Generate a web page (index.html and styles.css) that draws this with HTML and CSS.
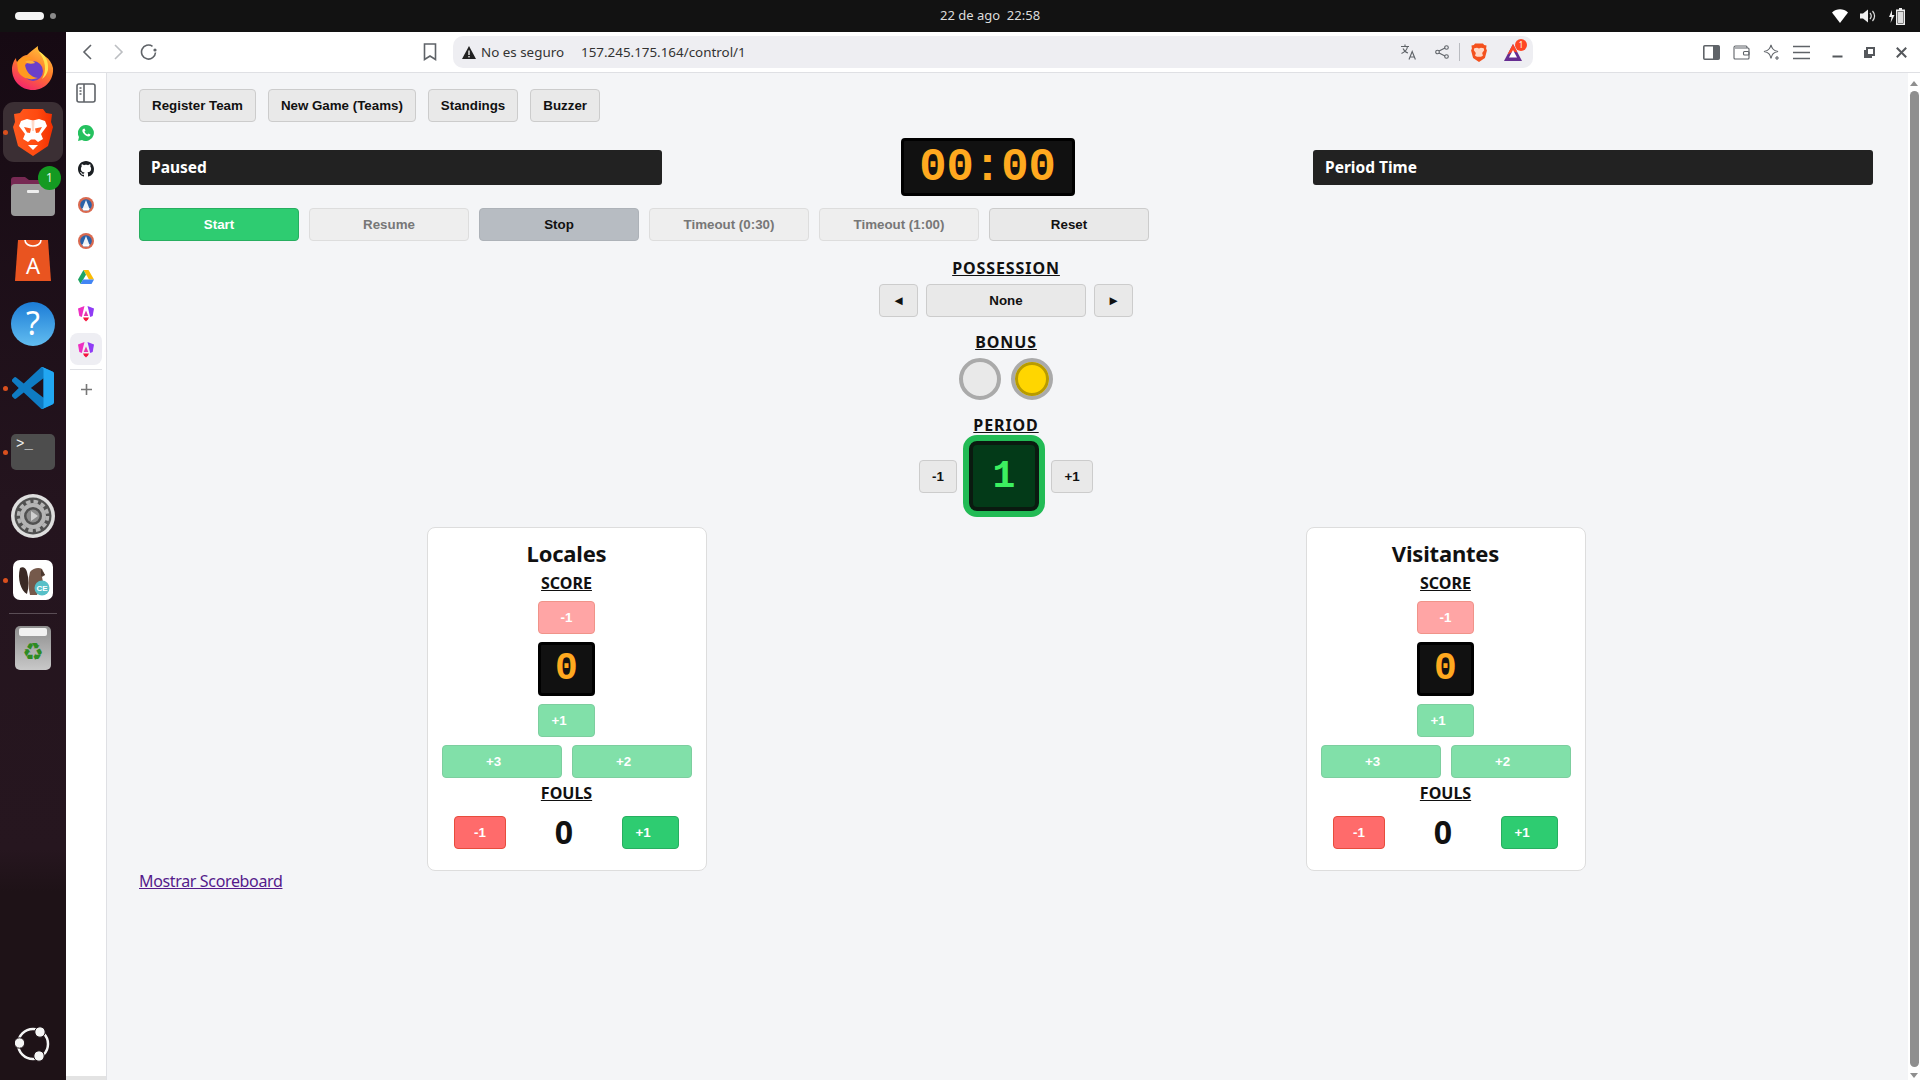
FILE: index.html
```html
<!DOCTYPE html>
<html lang="es">
<head>
    <meta charset="UTF-8" />
    <title>Control</title>
    <link rel="stylesheet" href="styles.css">
</head>
<body>
    <div class="topbar">
        <div class="workspaces"><span class="pill"></span><span class="dot"></span></div>
        <div class="clock">22 de ago&nbsp;&nbsp;22:58</div>
        <div class="tray">
            <svg width="16" height="14" viewBox="0 0 16 14"><path d="M0 3.5C4.5-.8 11.500-.8 16 3.500L8 14z" fill="#fff"/></svg>
            <svg width="16" height="14" viewBox="0 0 16 14"><path d="M0 4.500h3L8 .5v13l-5-4H0z" fill="#eee"/><path d="M10 4c1.500 1.800 1.500 4.200 0 6M12.500 2c2.500 3 2.500 7 0 10" stroke="#ddd" stroke-width="1.200" fill="none"/></svg>
            <svg width="18" height="17" viewBox="0 0 18 17"><path d="M4 2 1 9h2.500L2.500 15 6.500 7H4z" fill="#eee"/><path d="M11 0h3v1.500h3V17H8V1.500h3z" fill="#eee"/><rect x="9.500" y="3" width="6" height="12.500" fill="#121212"/><rect x="10" y="3.500" width="5" height="11.500" fill="#ddd"/></svg>
        </div>
    </div>

    <div class="desktop">
        <div class="dock">
            <div class="dock-item">
                <svg width="44" height="46" viewBox="0 0 44 46">
                    <defs>
                        <linearGradient id="fx" x1="0.8" y1="0" x2="0.3" y2="1"><stop offset="0" stop-color="#ffc93d"/><stop offset=".5" stop-color="#ff7a2a"/><stop offset="1" stop-color="#f3236e"/></linearGradient>
                    </defs>
                    <path d="M27 1c-1 5 3 7 8 11 3 2 6 6 7 11 1 12-8 22-20 22C10 45 1 36 1 24c0-4 2-9 4-11 0 3 1 4 2 5 1-4 5-8 9-8 3-3 7-6 11-9z" fill="url(#fx)"/>
                    <circle cx="22" cy="26" r="10" fill="#6b3fc9"/>
                    <path d="M6 17c4-6 10-6 16-4-3 1-7 3-8 7 1 6 5 12 13 13-8 3-17 0-20-7z" fill="#ff9a1f"/>
                    <path d="M14 17c3-2 8-2 10 1-3 1-7 1-10-1z" fill="#ffb13a"/>
                    <path d="M27 6c7 3 11 10 10 19-1 4-3 7-6 9 5-8 4-19-4-28z" fill="#ffe14d"/>
                </svg>
            </div>
            <div class="dock-item is-active">
                <span class="run-dot"></span>
                <svg width="40" height="48" viewBox="0 0 40 48">
                    <defs>
                        <linearGradient id="bv" x1="0" y1="0" x2="1" y2="0"><stop offset="0" stop-color="#ff5a1f"/><stop offset=".6" stop-color="#ff4a10"/><stop offset="1" stop-color="#f22f00"/></linearGradient>
                    </defs>
                    <path d="M10 1h20l3 4 6 1-1 8 2 5-5 19-15 10L5 38 0 19l2-5-1-8 6-1z" fill="url(#bv)"/>
                    <path d="M8 13l6-2 6 1.500 6-1.500 6 2 2 5-6 8 2 5-5 3-3-2.500h-4L15 34l-5-3 2-5-6-8z" fill="#fff"/>
                    <path d="M15 37h10l-5 5z" fill="#fff"/>
                    <path d="M11 19l7 1.500-1 4.500-3-.5zM29 19l-7 1.500 1 4.500 3-.5z" fill="#ff5a1f"/>
                    <path d="M18.500 13h3l-.5 10h-2z" fill="#ffd9c8"/>
                </svg>
            </div>
            <div class="dock-item">
                <svg width="46" height="42" viewBox="0 0 46 42">
                    <path d="M1 5q0-3 3-3h11l4 3h20q3 0 3 3v8H1z" fill="#772953"/>
                    <rect x="1" y="9" width="44" height="32" rx="4" fill="#9a9a9a"/>
                    <rect x="17" y="15" width="12" height="3" rx="1" fill="#eee"/>
                </svg>
                <span class="dock-badge">1</span>
            </div>
            <div class="dock-item">
                <svg width="36" height="42" viewBox="0 0 36 42">
                    <path d="M3 1h30l3 41H0z" fill="#e95420"/>
                    <path d="M10 1c0 8 16 8 16 0" stroke="#fff" stroke-width="1.600" fill="none"/>
                    <text x="18" y="35" class="store-a">A</text>
                </svg>
            </div>
            <div class="dock-item">
                <svg width="44" height="44" viewBox="0 0 44 44">
                    <defs>
                        <linearGradient id="hp" x1="0" y1="0" x2="0" y2="1"><stop offset="0" stop-color="#1c7cd6"/><stop offset="1" stop-color="#62bdf0"/></linearGradient>
                    </defs>
                    <circle cx="22" cy="22" r="22" fill="url(#hp)"/>
                    <text x="22" y="33" class="help-q">?</text>
                </svg>
            </div>
            <div class="dock-item">
                <span class="run-dot"></span>
                <svg width="42" height="42" viewBox="0 0 100 100">
                    <path d="M96 11 75 1a6 6 0 0 0-7 1L28 39 10 25a4 4 0 0 0-5 0L1 29a4 4 0 0 0 0 6l15 15L1 65a4 4 0 0 0 0 6l4 4a4 4 0 0 0 5 0l18-14 40 37a6 6 0 0 0 7 1l21-10a6 6 0 0 0 4-6V17a6 6 0 0 0-4-6zM75 73 45 50l30-23z" fill="#0f7cc4"/>
                    <path d="M68 2a6 6 0 0 1 7-1l21 10a6 6 0 0 1 4 6v66a6 6 0 0 1-4 6L75 99a6 6 0 0 1-7-1c3 2 7 0 7-3V5c0-3-4-5-7-3z" fill="#22a7f2"/>
                </svg>
            </div>
            <div class="dock-item">
                <span class="run-dot"></span>
                <div class="terminal-tile">&gt;_</div>
            </div>
            <div class="dock-item">
                <svg width="46" height="46" viewBox="0 0 46 46">
                    <circle cx="23" cy="23" r="22" fill="#dedede"/>
                    <circle cx="23" cy="23" r="18.500" fill="#505050"/>
                    <circle cx="23" cy="23" r="14.500" fill="none" stroke="#b4b4b4" stroke-width="3.500" stroke-dasharray="4.500 3.100"/>
                    <circle cx="23" cy="23" r="11" fill="none" stroke="#b4b4b4" stroke-width="4"/>
                    <circle cx="23" cy="23" r="6.500" fill="#8c8c8c"/>
                    <path d="M21 18l7 5-7 5z" fill="#cfcfcf"/>
                </svg>
            </div>
            <div class="dock-item">
                <span class="run-dot"></span>
                <svg width="40" height="40" viewBox="0 0 40 40">
                    <rect width="40" height="40" rx="7" fill="#fff"/>
                    <path d="M7 8c3-2 6 0 7 4 2 7 2 15 0 22-6-3-10-15-7-26z" fill="#3a2a25"/>
                    <path d="M17 12c3-4 9-5 12-3l3 6-3 2 1 5-2 4-4 9h-7c-2-8-2-16 0-23z" fill="#75594b"/>
                    <path d="M28 9l4 6-4 1z" fill="#4a372f"/>
                    <circle cx="29" cy="28" r="7.500" fill="#57c0c8"/>
                    <text x="29" y="31" class="beaver-ce">CE</text>
                </svg>
            </div>
            <div class="dock-sep"></div>
            <div class="dock-item">
                <div class="trash-tile"><span class="trash-lid"></span><span class="trash-mark">♻</span></div>
            </div>
            <div class="dock-item dock-bottom">
                <svg width="36" height="36" viewBox="0 0 36 36">
                    <circle cx="18" cy="18" r="15" fill="none" stroke="#f5f5f5" stroke-width="2.500"/>
                    <circle cx="25" cy="6" r="5.200" fill="#f5f5f5" stroke="#1f1318" stroke-width="1"/>
                    <circle cx="4.500" cy="17" r="5.200" fill="#f5f5f5" stroke="#1f1318" stroke-width="1"/>
                    <circle cx="24" cy="30" r="5.200" fill="#f5f5f5" stroke="#1f1318" stroke-width="1"/>
                </svg>
            </div>
        </div>

        <div class="browser">
            <div class="toolbar">
                <div class="nav-icons">
                    <svg width="16" height="16" viewBox="0 0 16 16"><path d="M11 1 4 8l7 7" class="ln"/></svg>
                    <svg width="16" height="16" viewBox="0 0 16 16"><path d="m5 1 7 7-7 7" class="ln ln-off"/></svg>
                    <svg width="18" height="18" viewBox="0 0 18 18"><path d="M15.500 9.500A7 7 0 1 1 12.500 3.300" class="ln"/><circle cx="15" cy="7" r="1.600" fill="#5f6368"/></svg>
                </div>
                <svg class="bookmark" width="14" height="18" viewBox="0 0 14 18"><path d="M1.500 1h11v15.500L7 13l-5.500 3.500z" class="ln"/></svg>
                <div class="urlbar">
                    <svg width="14" height="13" viewBox="0 0 14 13"><path d="M7 0 14 13H0z" fill="#222"/><rect x="6.300" y="4.500" width="1.400" height="4.500" fill="#eee"/><rect x="6.300" y="10" width="1.400" height="1.400" fill="#eee"/></svg>
                    <span class="not-secure">No es seguro</span>
                    <span class="url">157.245.175.164/control/1</span>
                    <div class="url-icons">
                        <svg class="translate" width="16" height="16" viewBox="0 0 16 16"><path d="M0 2.500h8M4 .5v2M6.500 2.500C6 6 4 8 .5 9.500M2 4.500c1 2 3 4 5 4.500" class="ln ln-thin"/><path d="m8 15.500 3.200-8 3.200 8M9 13h4.500" class="ln ln-thin"/></svg>
                        <svg width="14" height="14" viewBox="0 0 14 14"><circle cx="2.500" cy="7" r="1.800" class="ln ln-thin"/><circle cx="11.500" cy="2.500" r="1.800" class="ln ln-thin"/><circle cx="11.500" cy="11.500" r="1.800" class="ln ln-thin"/><path d="m4 6 6-3M4 8l6 3" class="ln ln-thin"/></svg>
                        <span class="url-sep"></span>
                        <svg width="16" height="19" viewBox="0 0 40 48"><path d="M10 1h20l3 4 6 1-1 8 2 5-5 19-15 10L5 38 0 19l2-5-1-8 6-1z" fill="#f4511e"/><path d="M8 13l7-1 5 2 5-2 7 1 1 5-5 7 2 7-5 3h-10l-5-3 2-7-5-7z" fill="#ffd9c8"/></svg>
                        <span class="rewards">
                            <svg width="18" height="17" viewBox="0 0 18 17"><path d="M9 0 18 17H0z" fill="#662d91"/><path d="M9 0 13.500 8.500 9 7.500 3.500 10.500z" fill="#ff4724"/><path d="M9 6 13 13.500H5z" fill="#fff"/></svg>
                            <span class="rewards-count">1</span>
                        </span>
                    </div>
                </div>
                <div class="browser-icons">
                    <svg width="17" height="15" viewBox="0 0 17 15"><rect x=".8" y=".8" width="15.400" height="13.400" rx="1" class="ln"/><rect x="10" y="1" width="6" height="13" fill="#5f6368"/></svg>
                    <svg width="17" height="15" viewBox="0 0 17 15"><path d="M14 3V2q0-1-1-1H2.500Q1 1 1 2.500v10.500q0 1 1 1h13q1 0 1-1V4q0-1-1-1H2" class="ln ln-thin"/><rect x="10.500" y="6.500" width="5.500" height="3.500" rx="1" class="ln ln-thin"/></svg>
                    <svg width="17" height="17" viewBox="0 0 17 17"><path d="M8 1c1 4 2.500 5.500 7 6.500-4.500 1-6 2.500-7 7-1-4.500-2.500-6-7-7C5.500 6.500 7 5 8 1z" class="ln ln-thin"/><path d="M14 12v4M12 14h4" class="ln ln-thin"/></svg>
                    <svg width="17" height="15" viewBox="0 0 17 15"><path d="M0 1.500h17M0 7.500h17M0 13.500h17" class="ln"/></svg>
                </div>
                <div class="window-icons">
                    <svg width="11" height="11" viewBox="0 0 11 11"><path d="M.5 9.500h10" class="ln ln-bold"/></svg>
                    <svg width="11" height="11" viewBox="0 0 11 11"><path d="M3 1h7v7H3z" class="ln ln-bold"/><path d="M1 3v7h7" class="ln ln-bold"/></svg>
                    <svg width="11" height="11" viewBox="0 0 11 11"><path d="m.8.8 9.400 9.400M10.200.8.800 10.200" class="ln ln-bold"/></svg>
                </div>
            </div>

            <div class="browser-body">
                <div class="sidebar">
                    <div class="side-item side-toggle">
                        <svg width="20" height="20" viewBox="0 0 20 20"><rect x="1" y="1" width="18" height="18" rx="2" class="ln"/><path d="M8 1v18" class="ln"/><path d="M3.500 5h2M3.500 8h2M3.500 11h2" class="ln"/></svg>
                    </div>
                    <div class="side-item">
                        <svg width="16" height="16" viewBox="0 0 16 16"><path d="M8 0a8 8 0 0 0-7 12L0 16l4-1a8 8 0 1 0 4-15z" fill="#25c15f"/><path d="M5 4c-1 1-1 3 1 5s4 3 6 2l.500-1.500-2-1-1 1C8 9 7 8 6.500 6.500l1-1-1-2z" fill="#fff"/></svg>
                    </div>
                    <div class="side-item">
                        <svg width="16" height="16" viewBox="0 0 16 16"><path fill="#1b1f23" d="M8 0C3.580 0 0 3.580 0 8c0 3.540 2.290 6.530 5.470 7.590.4.07.55-.17.55-.38 0-.19-.01-.82-.01-1.490-2.010.37-2.530-.49-2.690-.94-.09-.23-.48-.94-.82-1.130-.28-.15-.68-.52-.01-.53.63-.01 1.080.58 1.230.82.72 1.210 1.870.87 2.330.66.07-.52.28-.87.51-1.070-1.780-.2-3.640-.89-3.640-3.950 0-.87.31-1.590.82-2.150-.08-.2-.36-1.020.08-2.120 0 0 .67-.21 2.200.82.64-.18 1.320-.27 2-.27.68 0 1.360.09 2 .27 1.530-1.040 2.200-.82 2.200-.82.44 1.100.16 1.920.08 2.120.51.56.82 1.270.82 2.150 0 3.070-1.870 3.750-3.650 3.950.29.25.54.73.54 1.480 0 1.070-.01 1.930-.01 2.200 0 .21.15.46.55.38A8.013 8.013 0 0 0 16 8c0-4.420-3.580-8-8-8z"/></svg>
                    </div>
                    <div class="side-item"><svg width="16" height="16"><use href="#seal"/></svg></div>
                    <div class="side-item"><svg width="16" height="16"><use href="#seal"/></svg></div>
                    <div class="side-item">
                        <svg width="16" height="15" viewBox="0 0 16 15"><path d="M5.500 0h5L16 9.500h-5z" fill="#fbbc04"/><path d="M5.500 0 0 9.500 2.500 14 8 4.700z" fill="#1fa463"/><path d="M5 9.500h11L13.500 14h-11z" fill="#4285f4"/></svg>
                    </div>
                    <div class="side-item"><svg width="16" height="17"><use href="#ng"/></svg></div>
                    <div class="side-item is-current"><svg width="16" height="17"><use href="#ng"/></svg></div>
                    <div class="side-sep"></div>
                    <div class="side-add">
                        <svg width="11" height="11" viewBox="0 0 11 11"><path d="M5.500 0v11M0 5.500h11" class="ln ln-add"/></svg>
                    </div>
                    <div class="side-foot"></div>
                    <svg width="0" height="0" class="defs">
                        <symbol id="seal" viewBox="0 0 16 16">
                            <circle cx="8" cy="8" r="8" fill="#d9694f"/>
                            <circle cx="8" cy="8" r="5.800" fill="#2a62a8"/>
                            <path d="M8 3 10 8l1.500 4h-7L6 8z" fill="#eef2f6"/>
                            <path d="M4 11.500h8L10.500 13.500h-5z" fill="#fff"/>
                        </symbol>
                        <symbol id="ng" viewBox="0 0 16 17">
                            <path d="M6.500 1 0 3.500 1.300 11l2.500 1z" fill="#ee2fc2"/>
                            <path d="M9.500 1 16 3.500 14.700 11l-2.500 1z" fill="#8f3cf5"/>
                            <path d="M8 5.500 10.300 11H5.700z" fill="#e535ab"/>
                            <path d="M5 12.500h6l-1 2-2 2-2-2z" fill="#f5133e"/>
                        </symbol>
                    </svg>
                </div>

                <main class="page">
                    <div class="nav-row">
                        <button class="btn">Register Team</button>
                        <button class="btn">New Game (Teams)</button>
                        <button class="btn">Standings</button>
                        <button class="btn">Buzzer</button>
                    </div>

                    <div class="clock-row">
                        <div class="status status-left">Paused</div>
                        <div class="game-clock">00:00</div>
                        <div class="status status-right">Period Time</div>
                    </div>

                    <div class="timer-row">
                        <button class="btn btn-wide btn-start">Start</button>
                        <button class="btn btn-wide btn-off">Resume</button>
                        <button class="btn btn-wide btn-stop">Stop</button>
                        <button class="btn btn-wide btn-off">Timeout (0:30)</button>
                        <button class="btn btn-wide btn-off">Timeout (1:00)</button>
                        <button class="btn btn-wide">Reset</button>
                    </div>

                    <div class="center-col">
                        <div class="label label-spaced">POSSESSION</div>
                        <div class="possession">
                            <button class="btn btn-arrow">◄</button>
                            <button class="btn btn-wide">None</button>
                            <button class="btn btn-arrow">►</button>
                        </div>

                        <div class="label label-spaced">BONUS</div>
                        <div class="bonus">
                            <span class="lamp"></span>
                            <span class="lamp lamp-on"></span>
                        </div>

                        <div class="label label-spaced">PERIOD</div>
                        <div class="period">
                            <button class="btn btn-minus">-1</button>
                            <div class="period-box">1</div>
                            <button class="btn btn-plus">+1</button>
                        </div>
                    </div>

                    <div class="teams">
                        <section class="card">
                            <h2>Locales</h2>
                            <div class="label">SCORE</div>
                            <button class="btn btn-score btn-red faded">-1</button>
                            <div class="score-box">0</div>
                            <button class="btn btn-score btn-green faded btn-offset">+1</button>
                            <div class="score-extra">
                                <button class="btn btn-green faded btn-offset">+3</button>
                                <button class="btn btn-green faded btn-offset">+2</button>
                            </div>
                            <div class="label label-fouls">FOULS</div>
                            <div class="fouls">
                                <button class="btn btn-foul btn-red">-1</button>
                                <span class="foul-count">0</span>
                                <button class="btn btn-score btn-green btn-offset">+1</button>
                            </div>
                        </section>

                        <section class="card">
                            <h2>Visitantes</h2>
                            <div class="label">SCORE</div>
                            <button class="btn btn-score btn-red faded">-1</button>
                            <div class="score-box">0</div>
                            <button class="btn btn-score btn-green faded btn-offset">+1</button>
                            <div class="score-extra">
                                <button class="btn btn-green faded btn-offset">+3</button>
                                <button class="btn btn-green faded btn-offset">+2</button>
                            </div>
                            <div class="label label-fouls">FOULS</div>
                            <div class="fouls">
                                <button class="btn btn-foul btn-red">-1</button>
                                <span class="foul-count">0</span>
                                <button class="btn btn-score btn-green btn-offset">+1</button>
                            </div>
                        </section>
                    </div>

                    <a class="scoreboard-link" href="#">Mostrar Scoreboard</a>
                </main>

                <div class="scrollbar">
                    <span class="arrow-up"></span>
                    <span class="thumb"></span>
                    <span class="arrow-down"></span>
                </div>
            </div>
        </div>
    </div>
</body>
</html>
```

FILE: styles.css
```css
* {
    box-sizing: border-box;
}

html, body {
    margin: 0;
    height: 100%;
    overflow: hidden;
}

body {
    width: 1920px;
    height: 1080px;
    display: flex;
    flex-direction: column;
    font-family: "Noto Sans", sans-serif;
    background-color: #f4f5f7;
}

svg {
    display: block;
    flex: none;
}

.ln {
    fill: none;
    stroke: #5f6368;
    stroke-width: 1.6;
}

.ln-off {
    stroke: #bcbec2;
}

.ln-thin {
    stroke-width: 1.1;
}

.ln-bold {
    stroke: #55585c;
    stroke-width: 2;
}

.ln-add {
    stroke: #777;
}

/* system top bar */
.topbar {
    height: 32px;
    flex: none;
    background-color: #121212;
    display: flex;
    align-items: center;
    position: relative;
    padding: 0 14px 0 15px;
}

.workspaces {
    display: flex;
    align-items: center;
    gap: 6px;
}

.pill {
    width: 29px;
    height: 8px;
    border-radius: 4px;
    background-color: #f4f4f4;
}

.dot {
    width: 6px;
    height: 6px;
    border-radius: 50%;
    background-color: #8a8a8a;
}

.clock {
    position: absolute;
    left: 940px;
    top: 0;
    line-height: 31px;
    font-size: 13px;
    color: #dcdcdc;
    white-space: nowrap;
}

.tray {
    margin-left: auto;
    display: flex;
    align-items: center;
    gap: 12px;
}

.desktop {
    flex: 1;
    display: flex;
    min-height: 0;
}

/* ubuntu dock */
.dock {
    width: 66px;
    flex: none;
    display: flex;
    flex-direction: column;
    padding-top: 4px;
    background: linear-gradient(180deg, #160a13 0%, #24141e 45%, #26161f 78%, #1e1217 82%, #1e1217 100%);
}

.dock-item {
    height: 64px;
    flex: none;
    display: flex;
    align-items: center;
    justify-content: center;
    position: relative;
}

.dock-item.is-active::before {
    content: "";
    position: absolute;
    left: 3px;
    top: 2px;
    width: 60px;
    height: 60px;
    border-radius: 11px;
    background-color: #3b2f34;
}

.dock-item svg {
    position: relative;
}

.run-dot {
    position: absolute;
    left: 3px;
    top: 30px;
    width: 5px;
    height: 5px;
    border-radius: 50%;
    background-color: #d9501e;
    z-index: 1;
}

.dock-badge {
    position: absolute;
    left: 38px;
    top: 2px;
    width: 23px;
    height: 24px;
    border-radius: 50%;
    background-color: #149a22;
    color: #e8f5e8;
    font-size: 12px;
    line-height: 24px;
    text-align: center;
}

.store-a {
    font-family: "Noto Sans", sans-serif;
    font-size: 22px;
    font-weight: 400;
    fill: #fff;
    text-anchor: middle;
}

.help-q {
    font-family: "Noto Sans", sans-serif;
    font-size: 32px;
    fill: #fff;
    text-anchor: middle;
}

.beaver-ce {
    font-family: "Liberation Sans", sans-serif;
    font-size: 8px;
    font-weight: 700;
    fill: #fff;
    text-anchor: middle;
}

.terminal-tile {
    width: 44px;
    height: 36px;
    border-radius: 5px;
    background-color: #4d4d4d;
    color: #f2f2f2;
    font-family: "Liberation Mono", monospace;
    font-size: 14px;
    line-height: 16px;
    padding: 2px 0 0 5px;
}

.dock-sep {
    height: 1px;
    flex: none;
    margin: 1px 9px 2px;
    background-color: #5a4d55;
}

.trash-tile {
    width: 36px;
    height: 44px;
    border-radius: 5px;
    background: linear-gradient(180deg, #8e8e8e, #c8c8c8);
    text-align: center;
    position: relative;
}

.trash-lid {
    display: block;
    width: 28px;
    height: 8px;
    margin: 2px auto 0;
    border-radius: 2px;
    background-color: #f1f1f1;
}

.trash-mark {
    display: block;
    color: #2e8b22;
    font-family: "DejaVu Sans", sans-serif;
    font-size: 24px;
    line-height: 32px;
}

.dock-bottom {
    margin-top: auto;
    margin-bottom: 4px;
}

/* browser chrome */
.browser {
    flex: 1;
    display: flex;
    flex-direction: column;
    min-width: 0;
}

.toolbar {
    height: 41px;
    flex: none;
    display: flex;
    align-items: center;
    background-color: #fff;
    border-bottom: 1px solid #dfe0e4;
}

.nav-icons {
    display: flex;
    align-items: center;
    gap: 14px;
    margin-left: 14px;
}

.bookmark {
    margin-left: 265px;
}

.urlbar {
    width: 1080px;
    height: 32px;
    margin-left: 16px;
    display: flex;
    align-items: center;
    border-radius: 10px;
    background-color: #eeeef2;
    padding: 0 8px 0 9px;
    font-size: 13.400px;
    color: #333;
}

.not-secure {
    margin-left: 5px;
    width: 100px;
    white-space: nowrap;
}

.url {
    white-space: nowrap;
}

.url-icons {
    margin-left: auto;
    display: flex;
    align-items: center;
    gap: 12px;
}

.translate {
    margin-right: 6px;
}

.url-sep {
    width: 1px;
    height: 18px;
    margin: 0 -1px 0 -2px;
    background-color: #b9bbc0;
}

.rewards {
    display: block;
    position: relative;
    margin: 0 3px 0 5px;
}

.rewards-count {
    position: absolute;
    left: 11px;
    top: -5px;
    width: 12px;
    height: 12px;
    border-radius: 50%;
    background-color: #ff4724;
    color: #fff;
    font-size: 8px;
    line-height: 12px;
    text-align: center;
}

.browser-icons {
    display: flex;
    align-items: center;
    gap: 13px;
    margin-left: 170px;
}

.window-icons {
    display: flex;
    align-items: center;
    gap: 21px;
    margin-left: 22px;
}

.browser-body {
    flex: 1;
    display: flex;
    min-height: 0;
}

/* vertical tabs */
.sidebar {
    width: 41px;
    flex: none;
    display: flex;
    flex-direction: column;
    align-items: center;
    background-color: #fff;
    border-right: 1px solid #dfe0e4;
    padding-top: 2px;
    position: relative;
}

.side-item {
    width: 32px;
    height: 36px;
    flex: none;
    display: flex;
    align-items: center;
    justify-content: center;
    border-radius: 8px;
}

.side-toggle {
    margin-bottom: 4px;
}

.side-item.is-current {
    height: 32px;
    margin-top: 2px;
    background-color: #eeeef3;
}

.side-sep {
    width: 32px;
    height: 1px;
    flex: none;
    margin-top: 4px;
    background-color: #dfe0e4;
}

.side-add {
    margin-top: 14px;
}

.side-foot {
    margin-top: auto;
    width: 40px;
    height: 4px;
    background-color: #e3e3e3;
    align-self: flex-start;
}

.defs {
    position: absolute;
}

/* the app */
.page {
    flex: 1;
    min-width: 0;
    padding: 16px 35px 0 32px;
    display: flex;
    flex-direction: column;
    color: #111;
}

.nav-row {
    display: flex;
    gap: 12px;
}

.btn {
    font-family: "Liberation Sans", sans-serif;
    font-size: 13.333px;
    font-weight: 700;
    line-height: 15px;
    height: 33px;
    padding: 8px 12px;
    border: 1px solid #ccc;
    border-radius: 4px;
    background-color: #e9e9e9;
    color: #111;
    white-space: nowrap;
}

.clock-row {
    margin-top: 16px;
    display: flex;
    justify-content: space-between;
    align-items: center;
}

.status {
    height: 35px;
    padding: 0 12px;
    border-radius: 3px;
    background-color: #222;
    color: #fff;
    font-size: 15.500px;
    font-weight: 700;
    line-height: 34px;
}

.status-left {
    width: 523px;
}

.status-right {
    width: 560px;
}

.game-clock {
    width: 174px;
    height: 58px;
    border: 3px solid #000;
    border-radius: 4px;
    background-color: #111;
    color: #ffa91f;
    font-family: "Liberation Mono", monospace;
    font-size: 45.500px;
    font-weight: 700;
    line-height: 54px;
    text-align: center;
}

.timer-row {
    margin-top: 12px;
    display: flex;
    gap: 10px;
}

.btn-wide {
    width: 160px;
}

.btn-start {
    background-color: #2ecc71;
    border-color: #27ae60;
    color: #fff;
}

.btn-off {
    background-color: #eee;
    border-color: #ddd;
    color: #777;
}

.btn-stop {
    background-color: #b7bcc2;
    border-color: #adb2b8;
}

.center-col {
    display: flex;
    flex-direction: column;
    align-items: center;
}

.label {
    height: 20px;
    font-size: 16px;
    font-weight: 700;
    line-height: 20px;
    text-decoration: underline;
    white-space: nowrap;
}

.label-spaced {
    margin-top: 15px;
    letter-spacing: 0.900px;
}

.center-col .label-spaced:first-child {
    margin-top: 17px;
}

.possession {
    margin-top: 6px;
    display: flex;
    gap: 8px;
}

.btn-arrow {
    width: 39px;
    padding: 8px 0;
}

.bonus {
    margin-top: 6px;
    display: flex;
    gap: 10px;
}

.lamp {
    width: 42px;
    height: 42px;
    border: 4px solid #aaa;
    border-radius: 50%;
    background-color: #e9e9e9;
}

.lamp-on {
    background-color: #ffd600;
    box-shadow: inset 0 0 0 3px #b89b00;
}

.period {
    display: flex;
    align-items: center;
    gap: 6px;
}

.btn-minus {
    width: 38px;
    padding: 8px 0;
}

.btn-plus {
    width: 42px;
    padding: 8px 0;
}

.period-box {
    width: 82px;
    height: 82px;
    border: 6px solid #22bb55;
    border-radius: 14px;
    background-color: #033a18;
    box-shadow: inset 0 0 0 4px #0a1a10;
    color: #3cf060;
    font-family: "Liberation Mono", monospace;
    font-size: 38px;
    font-weight: 700;
    line-height: 72px;
    text-align: center;
}

.teams {
    margin-top: 10px;
    display: flex;
    justify-content: center;
    gap: 599px;
}

.card {
    width: 280px;
    height: 344px;
    border: 1px solid #ddd;
    border-radius: 8px;
    background-color: #fff;
    padding: 10px 14px 0;
    display: flex;
    flex-direction: column;
    align-items: center;
}

.card h2 {
    margin: 0 0 5px;
    font-size: 22px;
    font-weight: 700;
    line-height: 30px;
    letter-spacing: -0.200px;
}

.btn-score {
    width: 57px;
    flex: none;
    padding: 8px 0;
}

.card .label + .btn-score {
    margin-top: 8px;
}

.btn-red {
    background-color: #ff6b6b;
    border-color: #e74c3c;
    color: #fff;
}

.btn-green {
    background-color: #2ecc71;
    border-color: #27ae60;
    color: #fff;
}

.faded {
    opacity: 0.6;
}

.btn-offset {
    padding-right: 15px;
}

.score-box {
    width: 57px;
    height: 54px;
    margin: 8px 0;
    flex: none;
    border: 3px solid #000;
    border-radius: 4px;
    background-color: #111;
    color: #ffa91f;
    font-family: "Liberation Mono", monospace;
    font-size: 38px;
    font-weight: 700;
    line-height: 48px;
    text-align: center;
}

.score-extra {
    margin-top: 8px;
    display: flex;
    gap: 10px;
}

.score-extra .btn {
    width: 120px;
    padding-right: 28px;
}

.label-fouls {
    margin-top: 5px;
}

.fouls {
    width: 225px;
    margin-top: 13px;
    display: flex;
    align-items: center;
    justify-content: space-between;
}

.btn-foul {
    width: 52px;
    padding: 8px 0;
}

.foul-count {
    font-size: 32px;
    font-weight: 700;
    line-height: 31px;
    height: 33px;
}

.scoreboard-link {
    align-self: flex-start;
    font-size: 16px;
    line-height: 20px;
    letter-spacing: -0.350px;
    color: #551a8b;
}

/* page scrollbar */
.scrollbar {
    width: 12px;
    flex: none;
    background-color: #fff;
    display: flex;
    flex-direction: column;
    align-items: center;
    padding: 8px 0 2px;
}

.thumb {
    flex: 1;
    width: 9px;
    margin: 5px 0 6px;
    border-radius: 5px;
    background-color: #8f8f8f;
}

.arrow-up,
.arrow-down {
    width: 0;
    height: 0;
    border-left: 4px solid transparent;
    border-right: 4px solid transparent;
}

.arrow-up {
    border-bottom: 5px solid #8f8f8f;
}

.arrow-down {
    border-top: 5px solid #8f8f8f;
}
```
